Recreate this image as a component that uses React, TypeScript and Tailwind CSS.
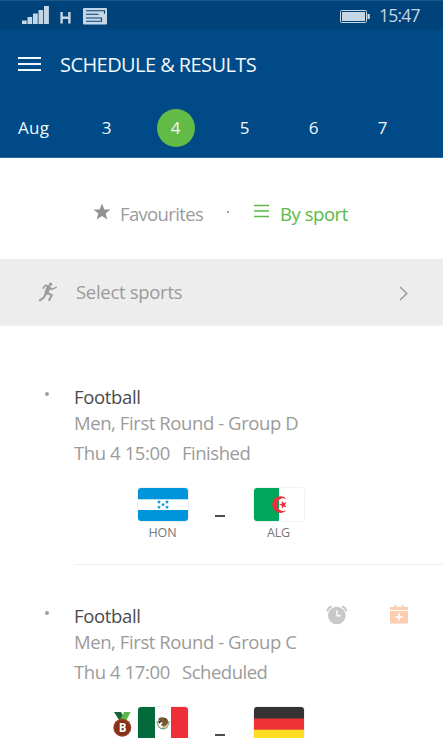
import type { ReactNode } from "react";

type Match = {
  sport: string;
  round: string;
  time: string;
  status: string;
  home: ReactNode;
  away: ReactNode;
  homeCode?: string;
  awayCode?: string;
  medal?: boolean;
  actions?: boolean;
};

const days = ["3", "4", "5", "6", "7"];

const STAR = "M0-10 2.6-3.3 9.5-3.1 4.1 1.2 6 8 0 4.1-6 8-4.1 1.2-9.5-3.1-2.6-3.3z";

function HondurasFlag() {
  return (
    <svg width="50" height="33" viewBox="0 0 50 33">
      <rect width="50" height="33" fill="#fff" />
      <rect width="50" height="11.3" fill="#0095da" />
      <rect y="22" width="50" height="11" fill="#0095da" />
      <g fill="#0095da">
        {[
          [21, 14],
          [29, 14],
          [25, 16.6],
          [21, 19.2],
          [29, 19.2],
        ].map(([x, y]) => (
          <path key={`${x}-${y}`} d={STAR} transform={`translate(${x} ${y}) scale(.22)`} />
        ))}
      </g>
    </svg>
  );
}

function AlgeriaFlag() {
  return (
    <svg width="50" height="33" viewBox="0 0 50 33">
      <rect width="50" height="33" fill="#fff" />
      <rect width="25" height="33" fill="#00a65a" />
      <path d="M32.8 11.200a8.300 8.300 0 1 0 0 10.800 6.400 6.400 0 1 1 0-10.800z" fill="#ee2e3a" />
      <path d={STAR} transform="translate(29.2 16.7) rotate(-90) scale(.42)" fill="#ee2e3a" />
    </svg>
  );
}

function MexicoFlag() {
  return (
    <svg width="50" height="33" viewBox="0 0 50 33">
      <rect width="50" height="33" fill="#fff" />
      <rect width="17" height="33" fill="#046a3b" />
      <rect x="33" width="17" height="33" fill="#ee2f37" />
      <path d="M19 14c0 5 3 8 6 8s6-3 6-8" fill="none" stroke="#8ba37c" strokeWidth="1.2" />
      <path d="M20 12c2-2 5-2.200 7-1 2 0 3 2 3.200 4-.4 2-1.600 3.500-3.600 4.500-1.600.5-2.600-.5-3.600-1.500l1.500-2z" fill="#7a5a35" />
      <path d="M20 13.500l4 .5-3 3zM26 11l2 1-1 2z" fill="#3d3424" />
      <path d="M24 18.500l4 .5-2 2z" fill="#e0a24d" />
      <path d="M23 20.800h4v1.200h-4z" fill="#59a3a5" />
    </svg>
  );
}

function GermanyFlag() {
  return (
    <svg width="50" height="33" viewBox="0 0 50 33">
      <rect width="50" height="12" fill="#343233" />
      <rect y="11.5" width="50" height="11.5" fill="#ee3337" />
      <rect y="22.7" width="50" height="10.3" fill="#ffde22" />
    </svg>
  );
}

function StatusBar() {
  return (
    <div className="flex h-[30px] items-start border-t border-[#1a5688] bg-[#00427a] text-[#c5d6e4]">
      <svg className="mt-[5px] ml-[22px]" width="28" height="19" viewBox="0 0 28 19" fill="currentColor">
        <path d="M0 14.500h4.700v3.500H0zM5.500 11h4.700v7H5.500zM11 7.500h4.700V18H11zM16.500 4h4.700v14h-4.700zM22 0h4.900v18H22z" />
      </svg>
      <svg className="mt-[11px] ml-[10px]" width="12" height="12" viewBox="0 0 12 12" fill="none" stroke="currentColor" strokeWidth="2.4">
        <path d="M1.600 0v11.500M9.400 0v11.500M1.600 5.700h7.800" />
      </svg>
      {/* Message icon */}
      <svg className="mt-[7px] ml-[11px]" width="24" height="17" viewBox="0 0 24 17">
        <rect width="24" height="16.500" rx="1" fill="currentColor" />
        <path d="M3 2.700h18.500v3M3 6.200h12.500M3 10h13v0M3 13.300h15.500v-3.300H16" stroke="#00427a" strokeWidth="1.100" fill="none" />
      </svg>
      <div className="grow" />
      <svg className="mt-[9px]" width="30" height="13" viewBox="0 0 30 13">
        <rect x=".5" y=".5" width="26" height="12" rx="1" fill="none" stroke="currentColor" />
        <rect x="2" y="2" width="23" height="9" fill="currentColor" />
        <rect x="27.5" y="4" width="2.3" height="5" fill="currentColor" />
      </svg>
      <span className="ml-[9px] w-[64px] text-[17.5px] leading-[28px] tracking-[-0.75px]">15:47</span>
    </div>
  );
}

function Header() {
  return (
    <header className="h-[158px] border-b border-[#2a689b] bg-[#004b87] text-[#f2f7fb]">
      <StatusBar />
      <div className="flex h-[68px] items-center pl-[18px]">
        <svg width="23" height="17" viewBox="0 0 23 17" stroke="currentColor" strokeWidth="2">
          <path d="M0 2h23M0 8h23M0 14h23" />
        </svg>
        <h1 className="mt-[2px] ml-[19px] text-[20px] leading-[28px] tracking-[-0.57px] whitespace-nowrap">SCHEDULE &amp; RESULTS</h1>
      </div>
      <div className="flex h-[60px] items-center text-[17px]">
        <span className="w-[72px] pl-[18px] tracking-[0.3px]">Aug</span>
        {days.map((day) => (
          <span key={day} className="flex w-[69px] justify-center">
            <span
              className={
                day === "4"
                  ? "flex size-[38px] items-center justify-center rounded-full bg-[#62bb46]"
                  : "flex size-[38px] items-center justify-center"
              }
            >
              {day}
            </span>
          </span>
        ))}
      </div>
    </header>
  );
}

function Filters() {
  return (
    <div className="flex h-[102px] items-center pt-[10px] pl-[93px] text-[18.5px] whitespace-nowrap">
      <svg className="-mt-[5px]" width="18" height="17" viewBox="-10 -10.5 20 19" fill="#919191">
        <path d={STAR} />
      </svg>
      <span className="ml-[9px] w-[106px] tracking-[-0.65px] text-[#9b9b9b]">Favourites</span>
      <span className="-mt-[5px] ml-px size-[2px] bg-[#a5a5a5]" />
      <svg className="-mt-[6px] ml-[25px]" width="15" height="14" viewBox="0 0 15 14" stroke="#5bb947" strokeWidth="1.6">
        <path d="M0 1.500h15M0 7h15M0 12.500h15" />
      </svg>
      <span className="ml-[11px] tracking-[-0.45px] text-[#5bb947]">By sport</span>
    </div>
  );
}

function SelectSports() {
  return (
    <div className="-mt-px flex h-[67px] items-center border-b border-[#f3f3f3] bg-[#ededed] pr-[35px] pl-[39px] text-[#9b9b9b]">
      <svg width="19" height="20" viewBox="0 0 19 20" fill="none" stroke="currentColor" strokeWidth="2" strokeLinecap="round" strokeLinejoin="round">
        <circle cx="11.6" cy="2.3" r="1.7" fill="currentColor" stroke="none" />
        <path d="M4.200 6.200l2.200-3 3.200.8 2.800 3.500 4.800-2.100" strokeWidth="1.5" />
        <path d="M9.500 5.300L7.500 10.800" strokeWidth="4" />
        <path d="M7 11.200L5 15.300 1 18.400M8.200 11l4.600 2.200-2.600 4.800" />
      </svg>
      <span className="ml-[18px] grow text-[18.5px] tracking-[-0.3px]">Select sports</span>
      <svg className="mt-[2px]" width="9" height="15" viewBox="0 0 9 15" fill="none" stroke="currentColor" strokeWidth="1.5">
        <path d="M1 1l6.800 6.500L1 14" />
      </svg>
    </div>
  );
}

function Medal() {
  return (
    <svg width="19" height="26" viewBox="0 0 19 26">
      <path d="M1 0h7l4 7-6 1z" fill="#17643b" />
      <path d="M11 0h6.500l-4 8H7z" fill="#5bb947" />
      <circle cx="9.3" cy="15.7" r="9" fill="#9b3b24" />
      <circle cx="9.3" cy="15.7" r="7.5" fill="#86301c" />
      <text x="9.5" y="19.8" textAnchor="middle" fontSize="11.5" fontWeight="700" fill="#fff">
        B
      </text>
    </svg>
  );
}

function Actions() {
  return (
    <div className="flex items-start pt-[4px] pr-[35px]">
      <svg width="22" height="20" viewBox="0 0 22 20">
        <circle cx="10.8" cy="10.5" r="8.8" fill="#c8c8c8" />
        <path d="M1.300 6.200Q2 2.200 5.700 1.500M20.300 6.200Q19.600 2.200 15.900 1.500" stroke="#c8c8c8" strokeWidth="2.2" fill="none" />
        <path d="M11 5.500v5.300h4" stroke="#fff" strokeWidth="1.4" fill="none" />
      </svg>
      <svg className="ml-[42px]" width="18" height="19" viewBox="0 0 18 19">
        <path d="M0 2h18v3H0zM0 6h18v12.500H0zM4.500 0h2v3h-2zM11.500 0h2v3h-2z" fill="#fbceaf" />
        <path d="M9 8.200v7.400M5.300 11.900h7.400" stroke="#fff" strokeWidth="1.5" />
      </svg>
    </div>
  );
}

function Team({ flag, code }: { flag: ReactNode; code?: string }) {
  return (
    <div className="flex w-[50px] flex-col items-center">
      <div className="overflow-hidden rounded-[3px] shadow-[0_0_0_1px_#f3f3f3]">{flag}</div>
      {code && (
        <span className="mt-[3px] -ml-px text-[12.5px] leading-[18px] tracking-[-0.1px] text-[#777]">{code}</span>
      )}
    </div>
  );
}

function MatchRow({ match }: { match: Match }) {
  return (
    <article className="flex h-[219px] pt-[36px]">
      <span className="mt-[10px] ml-[45px] size-[4px] shrink-0 rounded-full bg-[#a0a0a0]" />
      <div className="ml-[25px] flex h-[183px] grow flex-col border-b border-[#f0f0f0] text-[18.5px] whitespace-nowrap text-[#9b9b9b]">
        <div className="flex h-[27px] justify-between">
          <h2 className="leading-[29px] tracking-[-0.35px] text-[#4a4a4a]">{match.sport}</h2>
          {match.actions && <Actions />}
        </div>
        <p className="leading-[27px] tracking-[-0.42px]">{match.round}</p>
        <div className="mt-[2px] flex leading-[30px]">
          <span className="w-[108px] tracking-[-0.4px]">{match.time}</span>
          <span className="tracking-[-0.48px]">{match.status}</span>
        </div>
        <div className="mt-[20px] flex items-start">
          <div className="flex w-[64px] justify-end pt-[5px] pr-[6px]">{match.medal && <Medal />}</div>
          <Team flag={match.home} code={match.homeCode} />
          <span className="mr-[29px] ml-[27px] mt-[27px] h-[2px] w-[10px] bg-[#4c4c4c]" />
          <Team flag={match.away} code={match.awayCode} />
        </div>
      </div>
    </article>
  );
}

const matches: Match[] = [
  {
    sport: "Football",
    round: "Men, First Round - Group D",
    time: "Thu 4 15:00",
    status: "Finished",
    home: <HondurasFlag />,
    away: <AlgeriaFlag />,
    homeCode: "HON",
    awayCode: "ALG",
  },
  {
    sport: "Football",
    round: "Men, First Round - Group C",
    time: "Thu 4 17:00",
    status: "Scheduled",
    home: <MexicoFlag />,
    away: <GermanyFlag />,
    medal: true,
    actions: true,
  },
];

export default function App() {
  return (
    <main className="h-[738px] w-[443px] overflow-hidden bg-white font-['Open_Sans','Noto_Sans',sans-serif]">
      <Header />
      <Filters />
      <SelectSports />
      <section className="pt-[20px]">
        {matches.map((match) => (
          <MatchRow key={match.round} match={match} />
        ))}
      </section>
    </main>
  );
}
